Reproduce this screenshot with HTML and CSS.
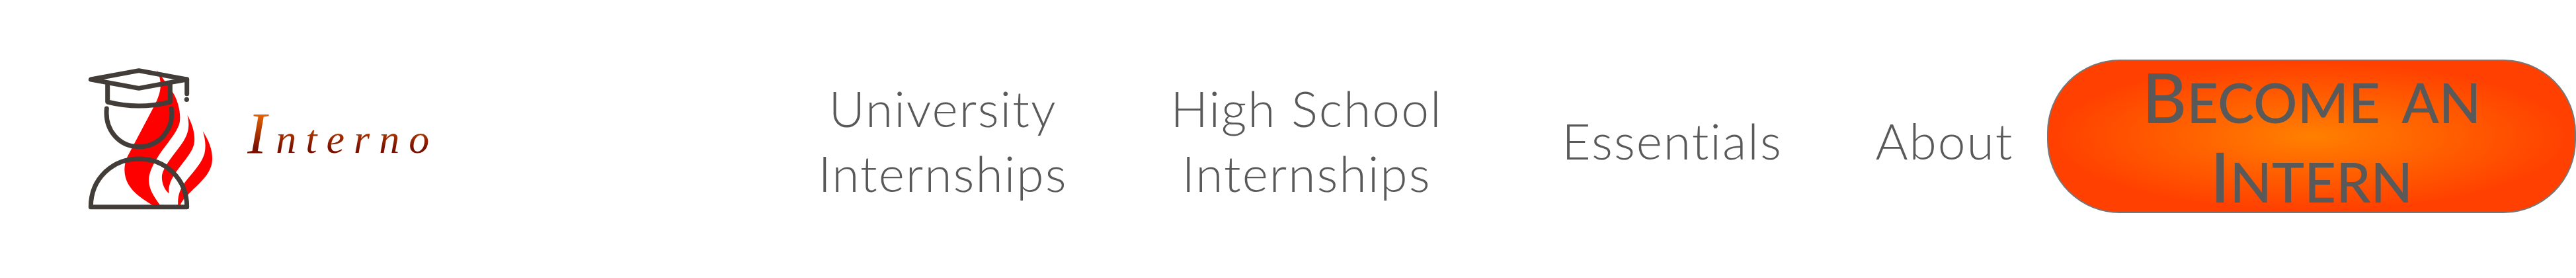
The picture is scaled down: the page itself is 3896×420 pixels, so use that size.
FILE: index.html
```html
<!DOCTYPE html>
<html lang="en">
<head>
    <meta charset="UTF-8">
    <meta name="viewport" content="width=device-width, initial-scale=1.0">
    <title>Interno</title>
    <link rel="stylesheet" href="styles.css">
</head>
<body>
    <header class="header">
        <a class="brand" href="#">
            <svg class="brand-logo" viewBox="0 0 660 696" aria-hidden="true">
                <g class="flame">
                    <path d="M352 48C375 80 400 115 425 150C450 190 462 250 455 285C445 330 400 375 360 435C325 490 308 530 318 570C325 605 350 635 366 660H332C290 635 245 605 222 565C200 525 200 480 218 440L340 210C362 165 385 115 352 48Z"/>
                    <path d="M490 252C515 295 528 345 520 385C510 425 470 465 435 515C415 545 402 575 407 607C385 590 372 555 375 525C380 490 420 440 455 395C490 350 505 310 490 252Z"/>
                    <path d="M560 325C590 370 608 420 602 465C595 520 545 560 505 600C480 625 465 640 458 660H448C445 620 455 590 480 555C520 505 555 470 568 425C575 395 572 360 560 325Z"/>
                </g>
                <g class="outline">
                    <path d="M52 90L270 50L488 90L270 130Z"/>
                    <path d="M488 90V155"/>
                    <path d="M128 115V192Q270 228 412 192V115"/>
                    <path d="M124 222C115 320 180 395 270 395C360 395 430 320 418 222"/>
                    <path d="M52 668C52 540 150 450 270 450C390 450 488 540 488 668Z"/>
                </g>
                <circle class="tassel" cx="487" cy="181" r="11"/>
            </svg>
            <span class="brand-name">Interno</span>
        </a>
        <nav class="nav">
            <a href="#">University Internships</a>
            <a href="#">High School Internships</a>
            <a href="#">Essentials</a>
            <a href="#">About</a>
        </nav>
        <a class="cta" href="#"><span class="cap">B</span>ecome an <span class="cap">I</span>ntern</a>
    </header>
</body>
</html>
```

FILE: styles.css
```css
body {
    margin: 0;
    background: #fff;
    font-family: Lato, "Open Sans", sans-serif;
    color: #595959;
}
a {
    color: inherit;
    text-decoration: none;
}
.header {
    display: flex;
    align-items: center;
    padding: 90px 0 98px 120px;
}
.brand {
    display: flex;
    align-items: center;
    gap: 34px;
}
.brand-logo {
    width: 220px;
    height: 232px;
}
.flame {
    fill: #f00;
}
.outline {
    fill: none;
    stroke: #423d38;
    stroke-width: 21;
    stroke-linecap: round;
    stroke-linejoin: round;
}
.tassel {
    fill: #423d38;
}
.brand-name {
    display: inline-block;
    font-family: "Liberation Serif", serif;
    font-style: italic;
    font-size: 62px;
    line-height: 80px;
    letter-spacing: 14px;
    background: linear-gradient(#ff7400, #7a1000 70%);
    -webkit-background-clip: text;
    background-clip: text;
    color: transparent;
}
.brand-name::first-letter {
    font-size: 88px;
}
.nav {
    margin-left: auto;
    padding-top: 12px;
    display: grid;
    grid-template-columns: 550px 550px 556px 268px;
    align-items: center;
    text-align: center;
    font-size: 75px;
    font-weight: 300;
    line-height: 98px;
    letter-spacing: 2px;
}
.nav a:nth-child(-n+2) {
    padding: 0 60px;
}
.cta {
    box-sizing: border-box;
    flex: none;
    width: 800px;
    height: 232px;
    margin-left: 21px;
    border: 2px solid #777;
    border-radius: 110px;
    background: radial-gradient(#ff8000, #ff4000 70%);
    padding: 2px 125px 0;
    text-align: center;
    font-size: 83px;
    font-weight: 500;
    line-height: 120px;
    word-spacing: 14px;
    text-transform: uppercase;
}
.cap {
    font-size: 104px;
    line-height: 100px;
}
```
